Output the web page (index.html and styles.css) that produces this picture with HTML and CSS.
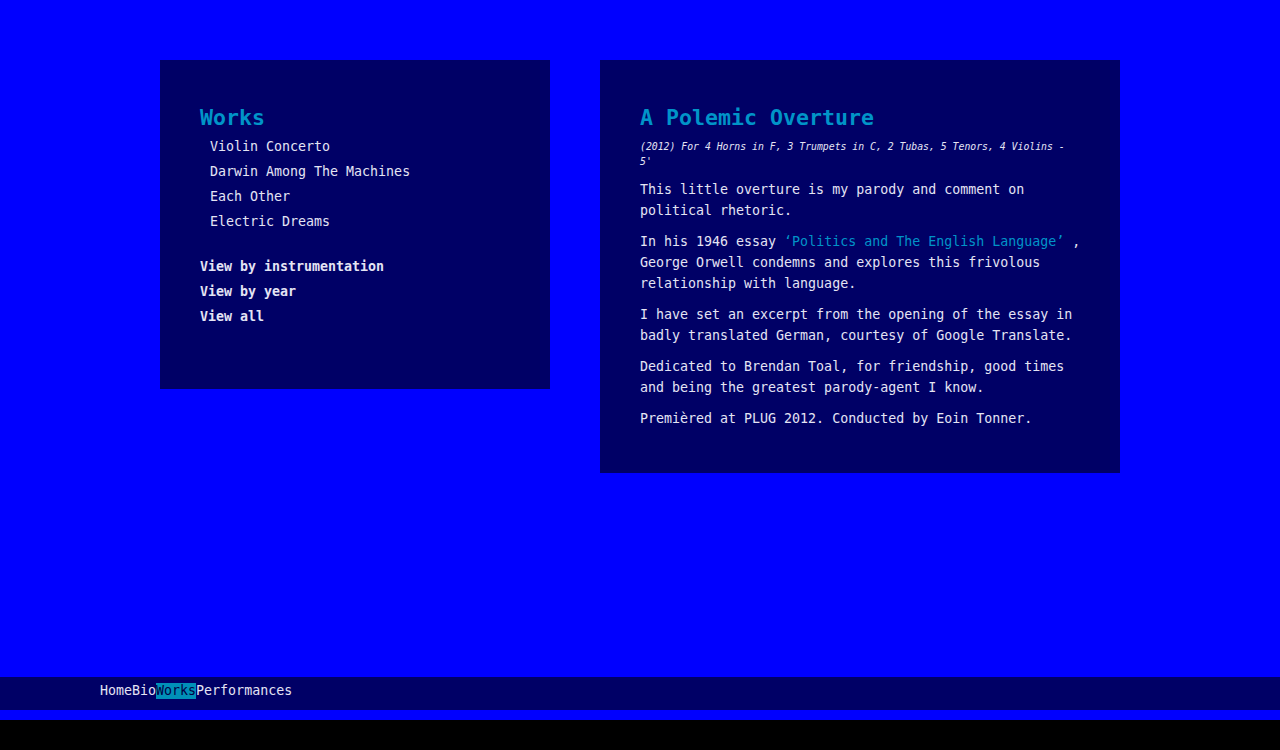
FILE: index.html
```html
<!DOCTYPE html>
<html>
<head>
<meta charset="utf-8">
<title>A Polemic Overture</title>
<link rel="stylesheet" href="styles.css">
</head>
<body>
<div class="page">
  <aside class="panel side">
    <h2 class="title">Works</h2>
    <ul class="works">
      <li><a href="#">Violin Concerto</a></li>
      <li><a href="#">Darwin Among The Machines</a></li>
      <li><a href="#">Each Other</a></li>
      <li><a href="#">Electric Dreams</a></li>
    </ul>
    <ul class="views">
      <li><a href="#">View by instrumentation</a></li>
      <li><a href="#">View by year</a></li>
      <li><a href="#">View all</a></li>
    </ul>
  </aside>
  <article class="panel main">
    <h1 class="title">A Polemic Overture</h1>
    <p class="meta">(2012) For 4 Horns in F, 3 Trumpets in C, 2 Tubas, 5 Tenors, 4 Violins - 5'</p>
    <p>This little overture is my parody and comment on political rhetoric.</p>
    <p>In his 1946 essay <a class="ref" href="#">‘Politics and The English Language’</a> , George Orwell condemns and explores this frivolous relationship with language.</p>
    <p>I have set an excerpt from the opening of the essay in badly translated German, courtesy of Google Translate.</p>
    <p>Dedicated to Brendan Toal, for friendship, good times and being the greatest parody-agent I know.</p>
    <p>Premièred at PLUG 2012. Conducted by Eoin Tonner.</p>
  </article>
</div>
<nav class="nav">
  <a href="#">Home</a><a href="#">Bio</a><a href="#" class="active">Works</a><a href="#">Performances</a>
</nav>
</body>
</html>
```
FILE: styles.css
```css
html {
  background: #000;
}
body {
  margin: 0;
  padding-bottom: 10px;
  background: #0000ff;
  font-family: "DejaVu Sans Mono", "Liberation Mono", monospace;
  font-size: 13.3px;
  color: #e4e4f4;
}
a {
  color: inherit;
  text-decoration: none;
}
.page {
  height: 677px;
  box-sizing: border-box;
  padding: 60px 0 0 160px;
  display: flex;
  align-items: flex-start;
  gap: 50px;
}
.panel {
  background: #000066;
  padding: 41px 40px 40px;
  box-sizing: border-box;
}
.side {
  width: 390px;
  height: 329px;
}
.main {
  width: 520px;
  padding-right: 37px;
  padding-bottom: 44px;
}
.title {
  margin: 0;
  color: #0094c8;
  font-size: 21.6px;
  font-weight: bold;
  line-height: 33px;
}
.works, .views {
  list-style: none;
  margin: 0;
  padding: 0;
}
.works {
  padding-left: 10px;
  margin-bottom: 20px;
}
.works li, .views li {
  line-height: 25px;
}
.views a {
  font-weight: bold;
}
.main p {
  margin: 10px 0 0;
  line-height: 21px;
}
.main .meta {
  margin-top: 5px;
  margin-right: 3px;
  font-size: 9.8px;
  font-style: italic;
  line-height: 15px;
}
.main .meta + p {
  margin-top: 10px;
}
.ref {
  color: #0094c8;
}
.nav {
  height: 33px;
  background: #000066;
  padding-left: 100px;
  display: flex;
  align-items: flex-start;
  padding-top: 6px;
  box-sizing: border-box;
}
.nav a {
  line-height: 16px;
  color: #e4e4f4;
}
.nav a.active {
  background: #0090b8;
  color: #000044;
}
```
